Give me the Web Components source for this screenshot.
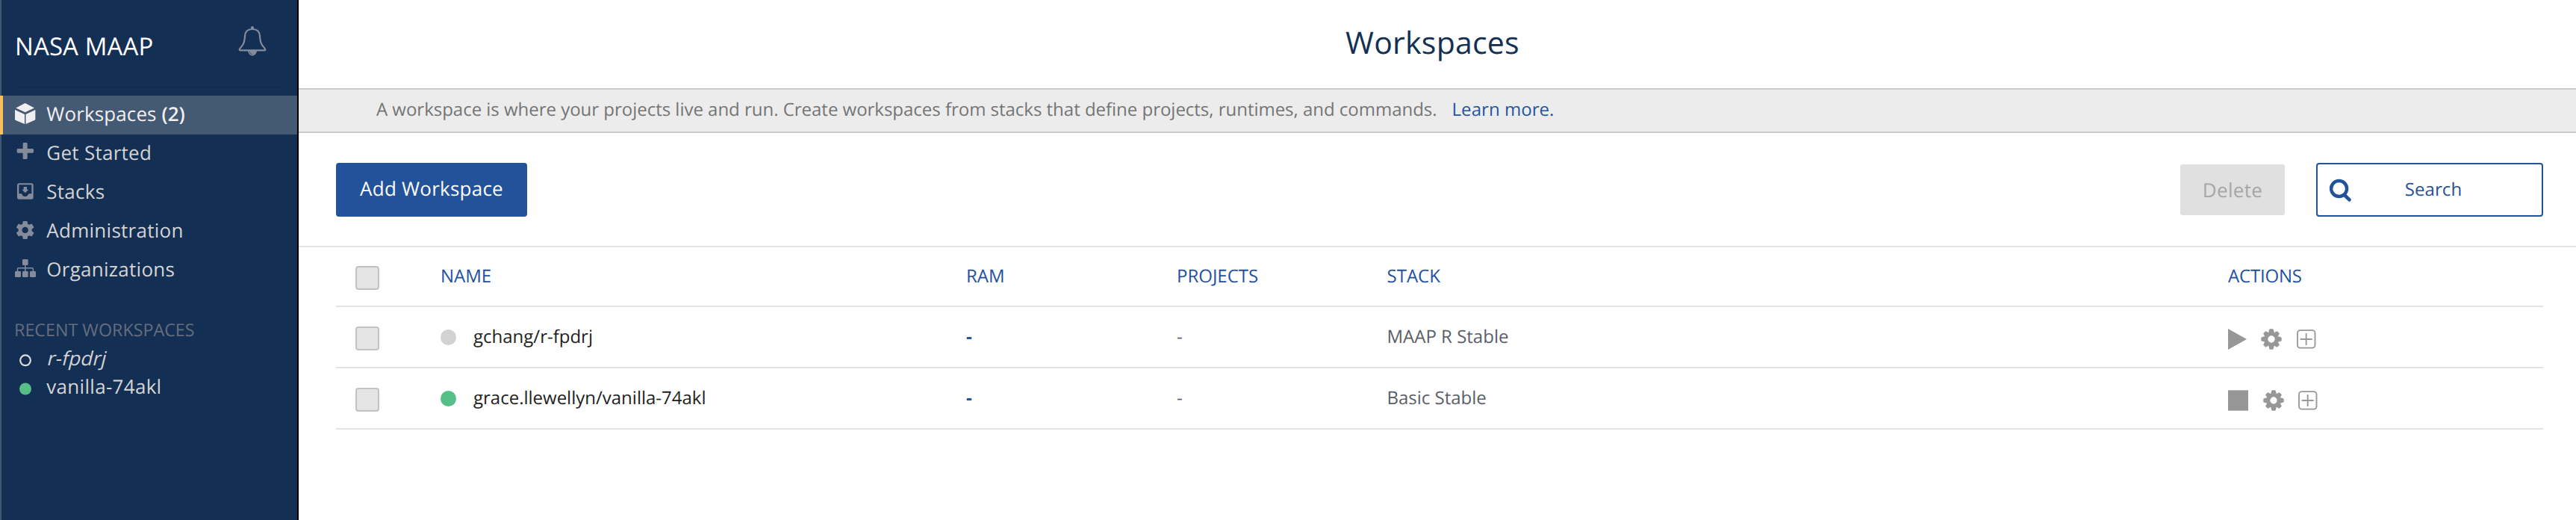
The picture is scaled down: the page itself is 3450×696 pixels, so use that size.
<!DOCTYPE html>
<html lang="en">
<head>
<meta charset="utf-8">
<title>Workspaces</title>
<style>
html,body{margin:0;height:100%;background:#fff}
body{font-family:"Open Sans","Noto Sans",sans-serif;text-rendering:geometricPrecision;overflow:hidden}
</style>
</head>
<body>
<che-dashboard></che-dashboard>
<script>
const define=(name,render)=>customElements.define(name,class extends HTMLElement{
  constructor(){super();this.attachShadow({mode:'open'});}
  connectedCallback(){this.shadowRoot.innerHTML=render(this);}
});

// Eight-toothed gear, centred on 0,0
const tooth='M-7,-41 H7 Q10,-34 11,-27 H-11 Q-10,-34 -7,-41Z';
const gear8='<g transform="translate(42 42)">'+[0,45,90,135,180,225,270,315].map(a=>`<path transform="rotate(${a}) ${a%90?'scale(.96)':''}" d="${tooth}"/>`).join('')+'<circle r="21.5" fill="none" stroke="currentColor" stroke-width="15"/></g>';
const ICONS={
  // name: [width, height, viewBox, markup]
  bell:[60,60,'0 0 180 180','<g fill="none" stroke="currentColor" stroke-width="6.5" stroke-linejoin="round" stroke-linecap="round"><path d="M84 42C66 42 55 51 54 70C53 86 52 92 48 100C44 109 37 115 32.500 122.500Q31 127 35 127H133Q137 127 135.500 122.500C131 115 124 109 120 100C116 92 115 86 114 70C113 51 102 42 84 42Z"/></g><path d="M78 42V36a6 6 0 0 1 12 0V42ZM66 128H102A18 21 0 0 1 66 128Z"/><path d="M72 132Q74 142 83 143" fill="none" stroke="#142f54" stroke-width="2"/>'],
  cube:[40,52,'0 -6 120 156','<path d="M56 24L93 43.500L56 61L19 43.500ZM15 51L54 69V108L18 93Q15 91.500 15 89ZM97 51L58.500 69V108L93 93Q97 91.500 97 89Z"/>'],
  plus:[40,52,'0 150 120 156','<path d="M47 187q0-4 4-4h10q4 0 4 4v20h20q5 0 5 4v9q0 4-5 4H65v21q0 4-4 4H51q-4 0-4-4V224H27q-4 0-4-4v-9q0-4 4-4H47Z"/>'],
  stack:[40,52,'0 306 120 156','<path fill-rule="evenodd" d="M31 345.500H81Q89 345.500 89 353V402Q89 410 81 410H31Q24 410 24 402V353Q24 345.500 31 345.500ZM31 352V388H42Q45 399 56 399Q67 399 70 388H82V352Z"/><path d="M50 360H63V371H70L56.500 385L43 371H50Z"/>'],
  gear:[40,52,'0 462 120 156','<path transform="translate(12.800 490.800) scale(3.600)" d="M19.430 12.980c.04-.32.07-.64.07-.98s-.03-.66-.07-.98l2.110-1.650c.19-.15.24-.42.12-.64l-2-3.460c-.12-.22-.39-.3-.61-.22l-2.490 1c-.52-.4-1.080-.73-1.690-.98l-.38-2.650C14.460 2.180 14.250 2 14 2h-4c-.25 0-.46.18-.49.42l-.38 2.650c-.61.25-1.170.59-1.690.98l-2.490-1c-.23-.09-.49 0-.61.22l-2 3.460c-.13.22-.07.49.12.64l2.110 1.650c-.04.32-.07.65-.07.98s.03.66.07.98l-2.110 1.650c-.19.15-.24.42-.12.64l2 3.460c.12.22.39.3.61.22l2.490-1c.52.4 1.080.73 1.690.98l.38 2.650c.03.24.24.42.49.42h4c.25 0 .46-.18.49-.42l.38-2.650c.61-.25 1.170-.59 1.690-.98l2.490 1c.23.09.49 0 .61-.22l2-3.460c.12-.22.07-.49-.12-.64l-2.110-1.650zM12 15.500c-1.930 0-3.500-1.570-3.500-3.500s1.570-3.500 3.500-3.500 3.500 1.570 3.500 3.500-1.570 3.500-3.500 3.500z"/>'],
  org:[40,52,'0 618 120 156','<rect x="45" y="651" width="23" height="24" rx="4"/><g><rect x="15" y="699" width="24" height="24" rx="4"/><rect x="45" y="699" width="23" height="24" rx="4"/><rect x="75" y="699" width="24" height="24" rx="4"/></g><path d="M56.500 674V700M25.500 700V690Q25.500 686.500 29 686.500H84Q88 686.500 88 690V700" fill="none" stroke="currentColor" stroke-width="4.500"/>'],
  off:[40,38,'0 0 40 38','<circle cx="19" cy="22.300" r="6.900" fill="none" stroke="#dcdcdc" stroke-width="2.200"/>'],
  on:[40,38,'0 0 40 38','<circle cx="19" cy="22.500" r="8" fill="#56be87"/>'],
  search:[32,32,'0 0 32 32','<g fill="none" stroke="currentColor"><circle cx="13.600" cy="13.500" r="10.500" stroke-width="4.500"/><path d="M21 22L27.500 28.300" stroke-width="4.600" stroke-linecap="round"/></g>'],
  play:[25,28,'0 0 75 84','<path d="M0 0L75 42L0 84Z"/>'],
  stop:[27,28,'0 0 81 84','<path d="M0 1H81V83H0Z"/>'],
  cog:[28,28,'0 0 84 84',gear8],
  add:[26,28,'0 0 78 84','<g fill="none" stroke="currentColor" stroke-width="5.500"><rect x="3" y="6.500" width="70.500" height="70.500" rx="11"/><path d="M38 18V66M14 42H62"/></g>']
};
define('che-icon',el=>{const [w,h,vb,m]=ICONS[el.getAttribute('name')];
  return `<style>:host{display:block;flex:none;width:${w}px;height:${h}px}svg{display:block}</style><svg width="${w}" height="${h}" viewBox="${vb}" fill="currentColor">${m}</svg>`;});

define('nav-item',el=>{const on=el.hasAttribute('active');return `<style>
:host{display:flex;height:52px;box-sizing:border-box;padding-left:15px;color:${on?'#f0f0f0':'#848c9b'};${on?'background:#445974;box-shadow:inset 4px 0 #f9bf5c;':''}}
span{margin-left:7.300px;font-size:26px;line-height:48px;letter-spacing:${on?'.12px':'.27px'};color:${on?'#f0f0f0':'#d4d4d4'};white-space:pre}
::slotted(b){font-weight:600;letter-spacing:0}
</style><che-icon name="${el.getAttribute('icon')}"></che-icon><span><slot></slot></span>`;});

define('recent-item',el=>`<style>
:host{display:flex;height:38px;padding-left:15px}
span{margin-left:7.300px;font-size:26px;line-height:38px;letter-spacing:.3px;color:#d4d4d4}
:host([state=off]) span{transform:skewX(-14deg);transform-origin:0 29px}
</style><che-icon name="${el.getAttribute('state')}"></che-icon><span><slot></slot></span>`);

define('side-bar',()=>`<style>
:host{display:block;flex:none;width:400px;box-sizing:border-box;border-right:2px solid #000;background:linear-gradient(90deg,#425872 2px,#142f54 2px)}
header{display:flex;justify-content:space-between;height:116px;margin:0 20px 10px;border-bottom:2px solid #122a4b}
h1{margin:0;font:400 33px/124px "Open Sans",sans-serif;letter-spacing:.1px;color:#fff;white-space:nowrap}
header che-icon{margin:25px 8px 0 0;color:#848c9b}
h2{margin:34px 0 0 19px;font:400 23.300px/38px "Open Sans",sans-serif;color:#656d7e}
</style>
<header><h1>NASA MAAP</h1><che-icon name="bell"></che-icon></header>
<nav-item icon="cube" active>Workspaces <b>(2)</b></nav-item>
<nav-item icon="plus">Get Started</nav-item>
<nav-item icon="stack">Stacks</nav-item>
<nav-item icon="gear">Administration</nav-item>
<nav-item icon="org">Organizations</nav-item>
<h2>RECENT WORKSPACES</h2>
<recent-item state="off">r-fpdrj</recent-item>
<recent-item state="on">vanilla-74akl</recent-item>`);

define('page-head',()=>`<style>
:host{display:block}
h1{margin:0;padding-right:13px;height:118px;font:400 41px/114px "Open Sans",sans-serif;letter-spacing:.24px;text-align:center;color:#142f54}
p{margin:0;height:56px;padding-left:104px;border:solid #c9c9c9;border-width:2px 0;background:#ececec;font-size:24px;line-height:53px;letter-spacing:-.018px;color:#757575;white-space:nowrap}
a{color:#2455a1;margin-left:20px;letter-spacing:.05px}
</style><h1>Workspaces</h1><p>A workspace is where your projects live and run. Create workspaces from stacks that define projects, runtimes, and commands.<a>Learn more.</a></p>`);

define('tool-bar',()=>`<style>
:host{display:flex;box-sizing:border-box;padding:40px 44px 0 50px;border-bottom:2px solid #e2e2e2;height:153px;align-items:flex-start}
div{box-sizing:border-box;text-align:center;border-radius:4px;letter-spacing:.24px}
.add{width:256px;height:72px;background:#22529a;color:#fff;font-size:26px;line-height:69px}
.del{width:140px;height:68px;margin:2px 42px 0 auto;background:#e0e0e0;color:#a6a6a6;font-size:26px;line-height:68px;border-radius:3px;letter-spacing:.32px}
.search{display:flex;width:304px;height:72px;border:2px solid #22529a;color:#22529a;font-size:24px;line-height:67px;letter-spacing:.1px}
.search che-icon{margin:19px 0 0 15px}
.search span{flex:1;padding-right:38px;padding-left:1px}
</style><div class="add">Add Workspace</div><div class="del">Delete</div><div class="search"><che-icon name="search"></che-icon><span>Search</span></div>`);

define('check-box',()=>`<style>:host{display:block;box-sizing:border-box;width:32px;height:32px;margin:var(--box-top,26px) 0 0 26px;border:2px solid #c2c2c2;border-radius:4px;background:#e4e4e4}</style>`);

const GRID='display:grid;grid-template-columns:140px 704px 282px 281.5px 1126.5px 1fr;font-size:24px;border-bottom:2px solid #e2e2e2;white-space:nowrap;';
define('table-head',()=>`<style>:host{${GRID}height:78px;line-height:77px;color:#2351a0;--box-top:25px}</style>
<check-box></check-box><span>NAME</span><span>RAM</span><span>PROJECTS</span><span>STACK</span><span style="letter-spacing:-.2px">ACTIONS</span>`);

define('workspace-row',el=>{const run=el.hasAttribute('running');return `<style>
:host{${GRID}height:80px;line-height:79px;color:#5a6069}
.name{display:flex;color:#222}
i{width:21px;height:21px;margin:30px 23px 0 0;border-radius:50%;background:${run?'#56be87':'#d2d2d2'}}
b{font-weight:700;color:#2351a0}
.act{display:flex;padding-top:28.500px;color:#979797}
.act :nth-child(2){margin:0 ${run?'19.800px 0 19.500px':'19.700px 0 19.300px'}}
</style><check-box></check-box><span class="name"><i></i><slot></slot></span><b>-</b><span>-</span><span>${el.getAttribute('stack')}</span>
<span class="act"><che-icon name="${run?'stop':'play'}"></che-icon><che-icon name="cog"></che-icon><che-icon name="add"></che-icon></span>`;});

define('che-dashboard',()=>`<style>
:host{display:flex;height:100vh}
main{flex:1;min-width:0}
section{margin:0 44px 0 50px}
</style><side-bar></side-bar><main><page-head></page-head><tool-bar></tool-bar><section>
<table-head></table-head>
<workspace-row stack="MAAP R Stable">gchang/r-fpdrj</workspace-row>
<workspace-row stack="Basic Stable" running>grace.llewellyn/vanilla-74akl</workspace-row>
</section></main>`);
</script>
</body>
</html>
